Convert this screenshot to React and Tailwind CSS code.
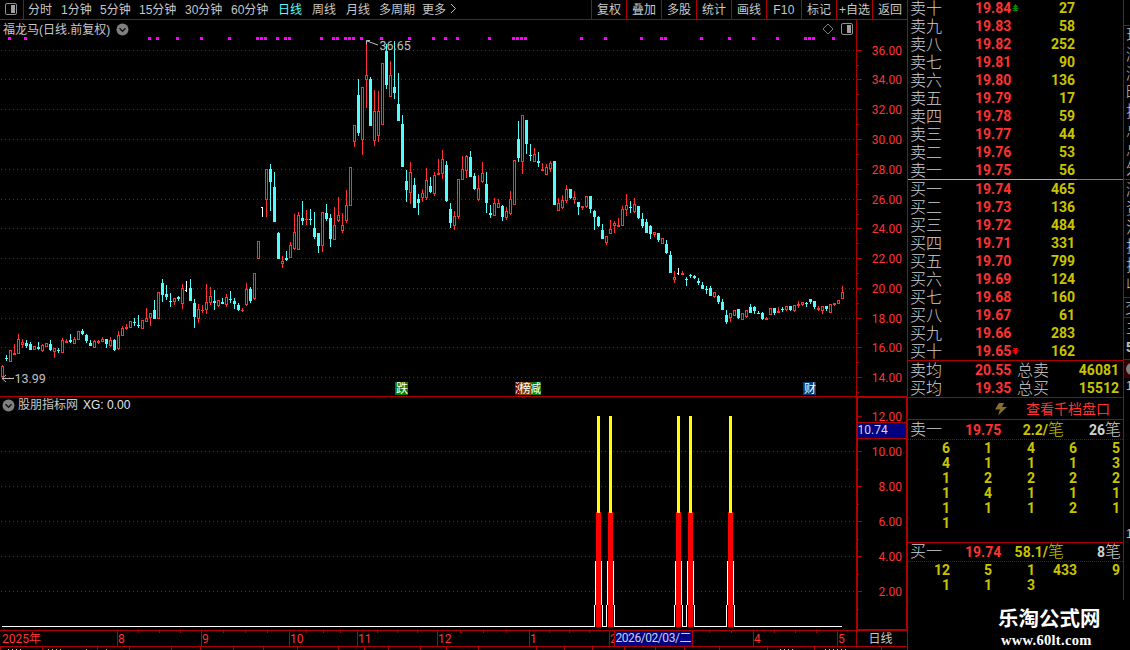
import clsx from "clsx";

const PERIODS = [
  { label: "分时", width: "w-[33px]" },
  { label: "1分钟", width: "w-[39px]" },
  { label: "5分钟", width: "w-[39px]" },
  { label: "15分钟", width: "w-[46px]" },
  { label: "30分钟", width: "w-[46px]" },
  { label: "60分钟", width: "w-[47px]" },
  { label: "日线", width: "w-[34px]", active: true },
  { label: "周线", width: "w-[34px]" },
  { label: "月线", width: "w-[33px]" },
  { label: "多周期", width: "w-[43px]" },
  { label: "更多", width: "w-[27px]" },
];

const TOOLS = ["复权", "叠加", "多股", "统计", "画线", "F10", "标记", "+自选", "返回"];

// r = up, c = down, w = flat. [kind, high, body top, body bottom, low]
const CANDLES = [
  ["r", 365, 366, 377, 377], ["c", 355, 358, 359, 361], ["r", 350, 350, 362, 362], ["r", 344, 353, 355, 355],
  ["r", 334, 339, 354, 354], ["r", 339, 342, 345, 348], ["c", 340, 343, 346, 348], ["c", 342, 344, 350, 350],
  ["r", 346, 346, 350, 350], ["c", 342, 347, 349, 350], ["r", 344, 345, 351, 352], ["r", 343, 343, 347, 347],
  ["c", 340, 344, 350, 351], ["r", 348, 348, 352, 358], ["c", 348, 350, 351, 353], ["r", 338, 340, 353, 353],
  ["r", 339, 341, 343, 343], ["c", 334, 340, 342, 343], ["r", 337, 339, 344, 344], ["r", 331, 331, 340, 340],
  ["c", 329, 331, 334, 335], ["c", 334, 335, 341, 343], ["c", 340, 343, 346, 346], ["r", 340, 341, 348, 348],
  ["r", 340, 341, 343, 344], ["r", 337, 339, 342, 342], ["c", 339, 339, 344, 348], ["r", 337, 340, 346, 347],
  ["c", 339, 340, 350, 351], ["r", 331, 335, 349, 350], ["r", 326, 328, 336, 336], ["r", 324, 327, 329, 330],
  ["r", 321, 321, 328, 328], ["c", 318, 322, 323, 326], ["c", 315, 325, 326, 328], ["r", 320, 320, 329, 329],
  ["r", 308, 318, 322, 322], ["r", 313, 313, 318, 326], ["c", 300, 310, 319, 319], ["r", 292, 292, 319, 319],
  ["c", 279, 283, 295, 302], ["c", 285, 294, 297, 300], ["c", 293, 301, 302, 307], ["r", 298, 298, 302, 305],
  ["c", 296, 297, 299, 301], ["r", 284, 288, 304, 309], ["w", 281, 290, 291, 292], ["c", 279, 288, 301, 301],
  ["c", 299, 303, 317, 328], ["r", 304, 309, 319, 323], ["r", 305, 310, 311, 313], ["r", 284, 302, 310, 314],
  ["r", 287, 296, 303, 305], ["c", 290, 301, 303, 310], ["r", 300, 300, 306, 307], ["c", 298, 302, 304, 304],
  ["r", 294, 297, 305, 307], ["c", 291, 299, 300, 303], ["c", 298, 301, 304, 309], ["c", 303, 305, 310, 311],
  ["r", 308, 310, 311, 312], ["r", 283, 289, 305, 306], ["c", 287, 289, 301, 303], ["r", 273, 273, 299, 300],
  ["r", 241, 241, 259, 259], ["w", 207, 207, 208, 217], ["r", 169, 169, 200, 217], ["c", 164, 169, 182, 211],
  ["c", 172, 187, 222, 222], ["c", 232, 233, 259, 259], ["r", 256, 261, 264, 268], ["c", 251, 258, 260, 261],
  ["r", 242, 245, 258, 258], ["r", 214, 232, 249, 250], ["r", 212, 215, 250, 250], ["c", 201, 218, 221, 225],
  ["r", 210, 219, 220, 225], ["c", 209, 219, 220, 225], ["c", 212, 228, 237, 239], ["c", 233, 233, 246, 253],
  ["r", 212, 212, 246, 252], ["c", 204, 213, 219, 221], ["c", 214, 218, 239, 247], ["r", 207, 225, 240, 240],
  ["r", 197, 215, 221, 222], ["r", 213, 225, 231, 233], ["r", 190, 205, 221, 223], ["r", 167, 167, 206, 206],
  ["r", 125, 125, 142, 147], ["c", 79, 95, 133, 136], ["r", 87, 87, 140, 155], ["r", 43, 75, 80, 108],
  ["c", 77, 79, 126, 126], ["r", 90, 111, 141, 146], ["r", 91, 111, 136, 142], ["r", 63, 63, 125, 125],
  ["c", 44, 51, 85, 89], ["r", 61, 75, 97, 97], ["c", 41, 87, 93, 99], ["c", 73, 104, 121, 121],
  ["c", 115, 124, 167, 167], ["c", 170, 181, 190, 202], ["r", 162, 172, 193, 204], ["c", 178, 185, 208, 208],
  ["c", 194, 199, 203, 215], ["r", 189, 193, 198, 202], ["r", 168, 180, 198, 200], ["c", 177, 186, 192, 193],
  ["r", 172, 175, 194, 196], ["r", 159, 173, 175, 175], ["r", 150, 159, 174, 179], ["c", 161, 165, 201, 202],
  ["c", 203, 209, 223, 228], ["r", 211, 216, 226, 230], ["r", 179, 179, 217, 219], ["r", 156, 169, 180, 180],
  ["r", 155, 156, 171, 178], ["c", 151, 157, 177, 177], ["c", 173, 176, 189, 190], ["r", 175, 188, 200, 201],
  ["r", 162, 173, 182, 183], ["c", 172, 184, 203, 213], ["c", 205, 213, 215, 218], ["r", 198, 203, 216, 216],
  ["r", 199, 203, 208, 208], ["c", 205, 206, 217, 221], ["r", 207, 211, 218, 220], ["r", 191, 199, 214, 215],
  ["r", 160, 160, 205, 205], ["c", 121, 139, 158, 162], ["r", 115, 115, 162, 174], ["c", 120, 120, 144, 154],
  ["c", 144, 155, 156, 161], ["r", 148, 154, 162, 162], ["c", 152, 161, 163, 167], ["r", 163, 169, 171, 171],
  ["r", 164, 167, 175, 175], ["r", 161, 163, 169, 172], ["c", 161, 161, 205, 205], ["r", 198, 203, 211, 211],
  ["r", 195, 200, 208, 209], ["r", 185, 189, 201, 203], ["c", 189, 189, 198, 199], ["r", 191, 197, 200, 204],
  ["c", 202, 202, 207, 215], ["r", 206, 206, 208, 210], ["r", 196, 196, 207, 208], ["c", 196, 196, 209, 213],
  ["c", 210, 211, 217, 230], ["c", 216, 217, 226, 227], ["c", 224, 230, 239, 239], ["r", 236, 236, 243, 245],
  ["r", 220, 229, 234, 234], ["r", 221, 223, 226, 233], ["r", 218, 225, 227, 227], ["r", 206, 209, 226, 226],
  ["r", 194, 205, 210, 216], ["c", 201, 207, 208, 213], ["r", 198, 204, 212, 213], ["c", 206, 206, 218, 219],
  ["c", 213, 219, 226, 228], ["c", 219, 222, 233, 233], ["c", 225, 226, 234, 239], ["r", 232, 232, 235, 237],
  ["c", 233, 233, 240, 242], ["r", 238, 238, 244, 244], ["c", 240, 244, 253, 254], ["c", 251, 255, 273, 273],
  ["r", 271, 277, 280, 283], ["w", 268, 273, 274, 275], ["r", 271, 273, 275, 275], ["c", 277, 279, 280, 286],
  ["c", 274, 275, 276, 278], ["c", 275, 276, 278, 279], ["c", 278, 281, 283, 285], ["c", 282, 285, 289, 289],
  ["c", 286, 289, 290, 294], ["c", 286, 288, 296, 296], ["r", 292, 292, 297, 298], ["c", 295, 296, 302, 304],
  ["c", 299, 302, 310, 310], ["c", 310, 315, 322, 324], ["r", 313, 313, 318, 322], ["r", 310, 310, 316, 316],
  ["c", 309, 309, 318, 319], ["r", 313, 313, 320, 320], ["r", 310, 310, 317, 318], ["c", 304, 307, 313, 313],
  ["c", 306, 307, 311, 314], ["c", 311, 313, 314, 314], ["c", 312, 313, 319, 320], ["r", 317, 318, 320, 320],
  ["r", 308, 308, 315, 315], ["c", 308, 308, 313, 315], ["r", 307, 311, 313, 313], ["c", 307, 309, 310, 312],
  ["r", 306, 306, 310, 311], ["c", 306, 306, 310, 311], ["r", 305, 305, 311, 312], ["r", 301, 304, 306, 308],
  ["r", 302, 302, 305, 306], ["c", 302, 303, 304, 307], ["c", 299, 299, 302, 304], ["c", 301, 301, 307, 309],
  ["r", 306, 308, 310, 311], ["r", 306, 306, 311, 314], ["c", 306, 306, 309, 311], ["r", 304, 304, 313, 313],
  ["r", 303, 303, 305, 306], ["r", 300, 300, 304, 304], ["r", 286, 292, 299, 299],
];

const NEWS_DOTS = [
  8, 24, 148, 156, 176, 200, 228, 256, 260, 264, 276, 284, 288, 320, 332, 336, 344, 348, 352, 360, 380, 408, 432,
  444, 456, 488, 512, 516, 520, 524, 580, 604, 640, 660, 664, 700, 728, 752, 776, 804, 808, 812, 832,
];

const PRICE_AXIS = [
  ["36.00", 50], ["34.00", 79], ["32.00", 109], ["30.00", 139], ["28.00", 169], ["26.00", 199],
  ["24.00", 228], ["22.00", 258], ["20.00", 288], ["18.00", 318], ["16.00", 347], ["14.00", 377],
];

const XG_AXIS = [["12.00", 416], ["10.00", 451], ["8.00", 486], ["6.00", 521], ["4.00", 556], ["2.00", 591]];

const SIGNALS = [598, 610, 678, 690, 730];

const MONTHS = [
  ["8", 117], ["9", 201], ["10", 289], ["11", 357], ["12", 437], ["1", 529], ["2", 609], ["4", 753], ["5", 837],
];
const WEEK_TICKS = [
  138, 159, 180, 223, 245, 267, 306, 323, 340, 377, 397, 417, 460, 483, 506, 549, 569, 589, 709, 731, 774, 795, 816,
];
const FOOT_TICKS = [
  0, 42, 97, 129, 171, 200, 233, 263, 297, 338, 364, 388, 420, 446, 478, 536, 564, 592, 624, 655, 684, 719, 767, 814,
  881,
];

const SELLS = [
  ["卖十", "19.84", 27], ["卖九", "19.83", 58], ["卖八", "19.82", 252], ["卖七", "19.81", 90], ["卖六", "19.80", 136],
  ["卖五", "19.79", 17], ["卖四", "19.78", 59], ["卖三", "19.77", 44], ["卖二", "19.76", 53], ["卖一", "19.75", 56],
];
const BUYS = [
  ["买一", "19.74", 465], ["买二", "19.73", 136], ["买三", "19.72", 484], ["买四", "19.71", 331], ["买五", "19.70", 799],
  ["买六", "19.69", 124], ["买七", "19.68", 160], ["买八", "19.67", 61], ["买九", "19.66", 283], ["买十", "19.65", 162],
];
const SELL_QUEUE = [6, 1, 4, 6, 5, 4, 1, 1, 1, 3, 1, 2, 2, 2, 2, 1, 4, 1, 1, 1, 1, 1, 1, 2, 1, 1];
const BUY_QUEUE = [12, 5, 1, 433, 9, 1, 1, 3];

const RED = "#b00000";
const KIND_COLOR = { r: "#ff3232", c: "#54fcfc", w: "#ffffff" };

const Candle = ({ index, data }) => {
  const [kind, high, top, bottom, low] = data;
  const x = 2 + index * 4;
  const color = KIND_COLOR[kind];
  const hollow = kind === "r" && bottom - top > 2;
  if (kind === "w") {
    return (
      <g fill={color}>
        <rect x={x} y={high} width="1" height={low - high} />
        <rect x={x - 1} y={top} width="1" height="1" />
      </g>
    );
  }
  return (
    <g fill={color}>
      <rect x={x} y={high} width="1" height={low - high} />
      <rect x={x - 1} y={top} width="3" height={bottom - top} />
      {hollow && <rect x={x} y={top + 1} width="1" height={bottom - top - 2} fill="#000" />}
    </g>
  );
};

const GridLine = ({ y }) => (
  <line x1="1" x2="856" y1={y + 0.5} y2={y + 0.5} stroke="#a80808" strokeDasharray="1 3" />
);

const RoundToggle = () => (
  <svg width="13" height="13" viewBox="0 0 13 13">
    <circle cx="6.5" cy="6.5" r="6" fill="#808080" />
    <path d="M3.5 5.2 6.5 8.2 9.5 5.2" fill="none" stroke="#111" strokeWidth="1.4" />
  </svg>
);

const PanelIcon = () => (
  <svg width="12" height="12" viewBox="0 0 12 12">
    <rect x="0.5" y="0.5" width="11" height="11" rx="1.5" fill="none" stroke="#909090" />
    <rect x="6" y="2" width="4" height="8" fill="#a0a0a0" />
  </svg>
);

const TopBar = () => (
  <div className="flex h-5 border-b border-[#b00000] text-xs leading-[19px] text-[#c8c8c8]">
    <div className="flex w-6 items-center justify-center border-r border-[#b00000] pr-[2px] pb-[2px]">
      <PanelIcon />
    </div>
    <div className="flex flex-1 pt-px pl-1 leading-[18px]">
      {PERIODS.map((p) => (
        <span key={p.label} className={clsx("shrink-0 whitespace-nowrap", p.width, p.active && "text-[#54fcfc]")}>
          {p.label}
        </span>
      ))}
      <svg width="9" height="18" viewBox="0 0 9 18">
        <path d="M2 3 6.5 7.5 2 12" fill="none" stroke="#c0c0c0" />
      </svg>
    </div>
    <div className="flex w-[317px]">
      {TOOLS.map((t, i) => (
        <span
          key={t}
          className={clsx(
            "border-l border-[#b00000] pt-px text-center leading-[18px] whitespace-nowrap",
            i === 7 ? "w-[36px]" : "w-[35px]",
            t === "F10" && "tracking-wide"
          )}
        >
          {t}
        </span>
      ))}
      <span className="w-px bg-[#b00000]" />
    </div>
  </div>
);

const EventTag = ({ x, width, fill, label }) => (
  <g>
    <rect x={x} y="382" width={width} height="13" fill={fill} />
    <text x={x + width - 12} y="393" fontSize="12" fill="#fff">
      {label}
    </text>
  </g>
);

const PriceChart = () => (
  <div className="relative flex h-[377px]">
    <svg width="856" height="377" viewBox="0 20 856 377">
      {PRICE_AXIS.map(([, y]) => (
        <GridLine key={y} y={y} />
      ))}
      {NEWS_DOTS.map((x) => (
        <rect key={x} x={x} y="37" width="3" height="3" fill="#ff00ff" />
      ))}
      {CANDLES.map((c, i) => (
        <Candle key={i} index={i} data={c} />
      ))}
      <g stroke="#c0c0c0" fill="none">
        <path d="M366.5 44V40.500H370M367 41l11 4" />
        <path d="M2 378.500H14M6 375l-4 3.500 4 3.500" />
      </g>
      <g fontSize="12.500" fill="#c0c0c0" className="font-['Roboto',sans-serif]">
        <text x="379.500" y="50">36.65</text>
        <text x="14.500" y="383">13.99</text>
      </g>
      <EventTag x={395} width={13} fill="#008000" label="跌" />
      <EventTag x={529} width={12} fill="#008000" label="减" />
      <EventTag x={515} width={12} fill="#800000" label="涨" />
      <EventTag x={519} width={12} fill="#804000" label="榜" />
      <EventTag x={803} width={13} fill="#003c80" label="财" />
      <rect x="0" y="396" width="856" height="1" fill={RED} />
    </svg>
    <svg width="52" height="377" viewBox="856 20 52 377">
      <g fill={RED}>
        <rect x="856" y="20" width="1" height="377" />
        <rect x="907" y="20" width="1" height="377" />
        <rect x="856" y="396" width="52" height="1" />
        {PRICE_AXIS.map(([label, y]) => (
          <g key={label}>
            <rect x="857" y={y} width="5" height="1" />
            <rect x="857" y={y + 15} width="2" height="1" />
          </g>
        ))}
      </g>
      <g fontSize="12" fill="#ff3232" textAnchor="end" className="font-['Roboto',sans-serif]">
        {PRICE_AXIS.map(([label, y]) => (
          <text key={label} x="902" y={y + 5}>
            {label}
          </text>
        ))}
      </g>
    </svg>
    <div className="absolute top-0 left-0 flex h-[18px] w-[856px] items-center pl-[3px] text-xs text-[#c8c8c8]">
      <span className="w-[113px] pt-[2px] whitespace-nowrap">福龙马(日线.前复权)</span>
      <RoundToggle />
      <span className="flex-1" />
      <svg width="12" height="12" viewBox="0 0 12 12" className="mr-[7px]">
        <path d="M6 1 11 6 6 11 1 6Z" fill="none" stroke="#808080" />
      </svg>
      <span className="mr-[3px]">
        <PanelIcon />
      </span>
    </div>
  </div>
);

const SignalBar = ({ x }) => (
  <g>
    <rect x={x - 3} y="626" width="7" height="1" fill="#000" />
    <g fill="#fff">
      <rect x={x - 3} y="561" width="1" height="44" />
      <rect x={x + 3} y="561" width="1" height="44" />
      <rect x={x - 4} y="605" width="1" height="22" />
      <rect x={x + 4} y="605" width="1" height="22" />
    </g>
    <rect x={x - 2} y="512" width="5" height="115" fill="#f00" />
    <rect x={x - 1} y="416" width="3" height="97" fill="#ff0" />
  </g>
);

const IndicatorChart = () => (
  <div className="relative flex h-[233px]">
    <svg width="856" height="233" viewBox="0 397 856 233">
      {XG_AXIS.slice(1).map(([label, y]) => (
        <GridLine key={label} y={y} />
      ))}
      <rect x="2" y="626" width="840" height="1" fill="#fff" />
      {SIGNALS.map((x) => (
        <SignalBar key={x} x={x} />
      ))}
    </svg>
    <svg width="52" height="233" viewBox="856 397 52 233">
      <g fill={RED}>
        <rect x="856" y="397" width="2" height="233" />
        <rect x="906" y="397" width="2" height="233" />
        <rect x="856" y="397" width="52" height="1" />
        <rect x="856" y="629" width="52" height="1" />
        {XG_AXIS.map(([label, y]) => (
          <g key={label}>
            <rect x="858" y={y} width="4" height="1" />
            <rect x="858" y={y + 18} width="1" height="1" />
          </g>
        ))}
      </g>
      <g fontSize="12" fill="#ff3232" textAnchor="end" className="font-['Roboto',sans-serif]">
        {XG_AXIS.map(([label, y]) => (
          <text key={label} x="902" y={y + 5}>
            {label}
          </text>
        ))}
      </g>
      <rect x="858" y="422" width="48" height="17" fill={RED} />
      <rect x="858" y="423" width="48" height="15" fill="#000080" />
      <text x="857.500" y="434" fontSize="12" fill="#d8d8d8" className="font-['Roboto',sans-serif]">
        10.74
      </text>
    </svg>
    <div className="absolute top-0 left-0 flex h-4 items-center pl-[2px] text-xs">
      <RoundToggle />
      <span className="ml-[3px] text-[#c8c8c8]">股朋指标网</span>
      <span className="ml-[5px] text-[#e4e4e4]">XG: 0.00</span>
    </div>
  </div>
);

const DateAxis = () => (
  <svg width="908" height="20" viewBox="0 630 908 20">
    <g fill={RED}>
      <rect x="0" y="630" width="908" height="1" />
      <rect x="0" y="646" width="908" height="1" />
      <rect x="856" y="630" width="1" height="17" />
      <rect x="907" y="630" width="1" height="20" />
      {MONTHS.map(([m, x]) => (
        <rect key={m} x={x} y="631" width="1" height="15" />
      ))}
      {WEEK_TICKS.map((x) => (
        <rect key={x} x={x} y="631" width="1" height="2" />
      ))}
      {FOOT_TICKS.map((x) => (
        <rect key={x} x={x} y="647" width="1" height="3" />
      ))}
    </g>
    <g fontSize="12" fill="#ff3232" className="font-['Roboto','Noto_Sans_CJK_SC',sans-serif]">
      <text x="2" y="643">2025年</text>
      {MONTHS.map(([m, x]) => (
        <text key={m} x={x + 1} y="643">
          {m}
        </text>
      ))}
    </g>
    <rect x="614" y="631" width="79" height="15" fill={RED} />
    <rect x="615" y="631" width="77" height="15" fill="#000080" />
    <text
      x="615.500"
      y="642"
      fontSize="12"
      textLength="76"
      fill="#d0d0e0"
      className="font-['Roboto','Noto_Sans_CJK_SC',sans-serif]"
    >
      2026/02/03/二
    </text>
    <text x="868.500" y="643" fontSize="12" fill="#c8c8c8">
      日线
    </text>
    {/* top edge of the scrolling ticker */}
    <g fill="none" strokeDasharray="1 3">
      <path d="M8 649.500H22M780 649.500h16M825 649.500h24" stroke="#c0c0c0" />
      <path d="M48 649.500H62M86 649.500h2M106 649.500h2" stroke="#c8c800" />
    </g>
  </svg>
);

const LevelRow = ({ level, arrow }) => {
  const [name, price, volume] = level;
  return (
    <div className="flex h-[18px] items-center pl-[2px] leading-[18px]">
      <span className="w-[65px] pt-[2px] text-base leading-[18px] font-light text-[#d0d0d0]">{name}</span>
      <span className="w-[37px] font-['Roboto',sans-serif] text-sm leading-[18px] font-bold text-[#ff3232]">
        {price}
      </span>
      <svg width="8" height="8" viewBox="0 0 8 8">
        {arrow === "up" && <path d="M3.500 0 6 3H4.500V4H6.500V5H4.500V6H6V7H1V6H2.500V5H.5V4H2.500V3H1Z" fill="#009000" />}
        {arrow === "down" && <path d="M1 1H6V2H4.500V3H6.500V4H4.500L6 5 3.500 8 1 5 2.500 4H.5V3H2.500V2H1Z" fill="#f00" />}
      </svg>
      <span className="w-[55px] text-right font-['Roboto',sans-serif] text-sm leading-[18px] font-bold text-[#c8c400]">
        {volume}
      </span>
    </div>
  );
};

const TotalRow = ({ avgLabel, avg, totalLabel, total }) => (
  <div className="flex h-[18px] items-center pr-1 pl-[2px]">
    <span className="w-[65px] pt-[2px] text-base leading-[18px] font-light text-[#d0d0d0]">{avgLabel}</span>
    <span className="w-[42px] font-['Roboto',sans-serif] text-sm leading-[18px] font-bold text-[#ff3232]">{avg}</span>
    <span className="pt-[2px] text-base leading-[18px] font-light text-[#d0d0d0]">{totalLabel}</span>
    <span className="flex-1 text-right font-['Roboto',sans-serif] text-sm leading-[18px] font-bold text-[#c8c400]">
      {total}
    </span>
  </div>
);

const QueueHeader = ({ name, price, average, count, height }) => (
  <div
    className={clsx(
      "flex items-center border-b border-dotted border-[#a00000] pr-[2px] pl-[2px] font-['Roboto','Noto_Sans_CJK_SC',sans-serif] leading-[18px]",
      height
    )}
  >
    <span className="w-[55px] text-base leading-[18px] font-light text-[#d0d0d0]">{name}</span>
    <span className="w-[38px] text-sm leading-[18px] font-bold text-[#ff3232]">{price}</span>
    <span className="w-[61px] text-right text-sm leading-[18px] font-bold text-[#c8c400]">
      {average}/<span className="text-base leading-[18px] font-light">笔</span>
    </span>
    <span className="flex-1 text-right text-sm leading-[18px] font-bold text-[#d0d0d0]">
      {count}
      <span className="text-base leading-[18px] font-light">笔</span>
    </span>
  </div>
);

const QueueGrid = ({ values }) => (
  <div className="mt-px grid grid-cols-[42px_42px_43px_42px_43px] text-right font-['Roboto',sans-serif] text-sm leading-[15px] font-bold text-[#c8c400]">
    {values.map((v, i) => (
      <span key={i}>{v}</span>
    ))}
  </div>
);

const OrderBook = () => (
  <div className="flex w-[215px] flex-col overflow-hidden">
    <div className="-mt-px">
      {SELLS.map((s, i) => (
        <LevelRow key={s[0]} level={s} arrow={i === 0 ? "up" : undefined} />
      ))}
    </div>
    <div className="flex h-px">
      <span className="w-[169px] bg-[#e0a850]" />
      <span className="flex-1 bg-[#4888d0]" />
    </div>
    <div className="h-[180px]">
      {BUYS.map((b, i) => (
        <LevelRow key={b[0]} level={b} arrow={i === 9 ? "down" : undefined} />
      ))}
    </div>
    <div className="h-[38px] border-y border-[#b00000]">
      <TotalRow avgLabel="卖均" avg="20.55" totalLabel="总卖" total="46081" />
      <TotalRow avgLabel="买均" avg="19.35" totalLabel="总买" total="15512" />
    </div>
    <div className="flex h-[22px] items-center border-b border-[#b00000] pl-[87px]">
      <svg width="12" height="14" viewBox="0 0 12 14">
        <path d="M4 1H9L7 5H12L3 13.500 5 7.500H0Z" fill="#84702c" />
      </svg>
      <span className="ml-[19px] text-sm leading-5 text-[#ff3232]">查看千档盘口</span>
    </div>
    <div className="h-[123px] border-b border-[#b00000]">
      <QueueHeader name="卖一" price="19.75" average="2.2" count="26" height="h-5" />
      <QueueGrid values={SELL_QUEUE} />
    </div>
    <QueueHeader name="买一" price="19.74" average="58.1" count="8" height="h-[19px]" />
    <QueueGrid values={BUY_QUEUE} />
    <div className="mt-[15px] flex flex-col pl-[90px] text-white">
      <span className="text-[20.5px] leading-[22px] font-bold whitespace-nowrap">乐淘公式网</span>
      <span className="pl-[3px] font-['Liberation_Serif',serif] text-[14.5px] leading-[20px] font-bold tracking-[0.3px]">
        www.60lt.com
      </span>
    </div>
  </div>
);

// neighbouring quote panel, only its first pixels are inside the window
const SidePanel = () => (
  <div className="flex w-[7px] shrink-0 flex-col overflow-hidden text-base leading-[19px] font-light text-[#c0c0c0]">
    <div className="h-[600px] overflow-hidden border-l border-[#b00000]">
      <div className="h-[26px] border-b border-[#b00000]" />
      <div className="h-[154px] w-4 border-b border-[#b00000] pl-[2px]">
        {["现", "涨", "涨", "昨", "换", "总", "总", "外"].map((t, i) => (
          <div key={i}>{t}</div>
        ))}
      </div>
      <div className="h-[118px] w-4 border-b border-[#b00000] pl-[2px]">
        {["涨", "资", "流", "换", "换", "收"].map((t, i) => (
          <div key={i}>{t}</div>
        ))}
      </div>
      <div className="h-5 w-4 border-b border-[#b00000] pl-px">交</div>
      <div className="h-[42px] w-4 border-b border-[#b00000] pl-[2px]">
        <div>主</div>
        <div className="text-sm font-bold">5</div>
      </div>
      <div className="flex h-[18px] items-center bg-[#300000] pl-[2px]">
        <span className="h-3 w-3 shrink-0 rounded-full bg-[#808080]" />
      </div>
      <div className="pl-[2px] text-xs">1</div>
      <div className="mt-[132px] pl-[2px] text-xs">1</div>
    </div>
  </div>
);

const App = () => {
  return (
    <div className="flex h-[650px] w-[1130px] overflow-hidden bg-black font-['Liberation_Sans','Noto_Sans_CJK_SC',sans-serif]">
      <div className="flex w-[908px] shrink-0 flex-col">
        <TopBar />
        <PriceChart />
        <IndicatorChart />
        <DateAxis />
      </div>
      <OrderBook />
      <SidePanel />
    </div>
  );
};

export default App;
